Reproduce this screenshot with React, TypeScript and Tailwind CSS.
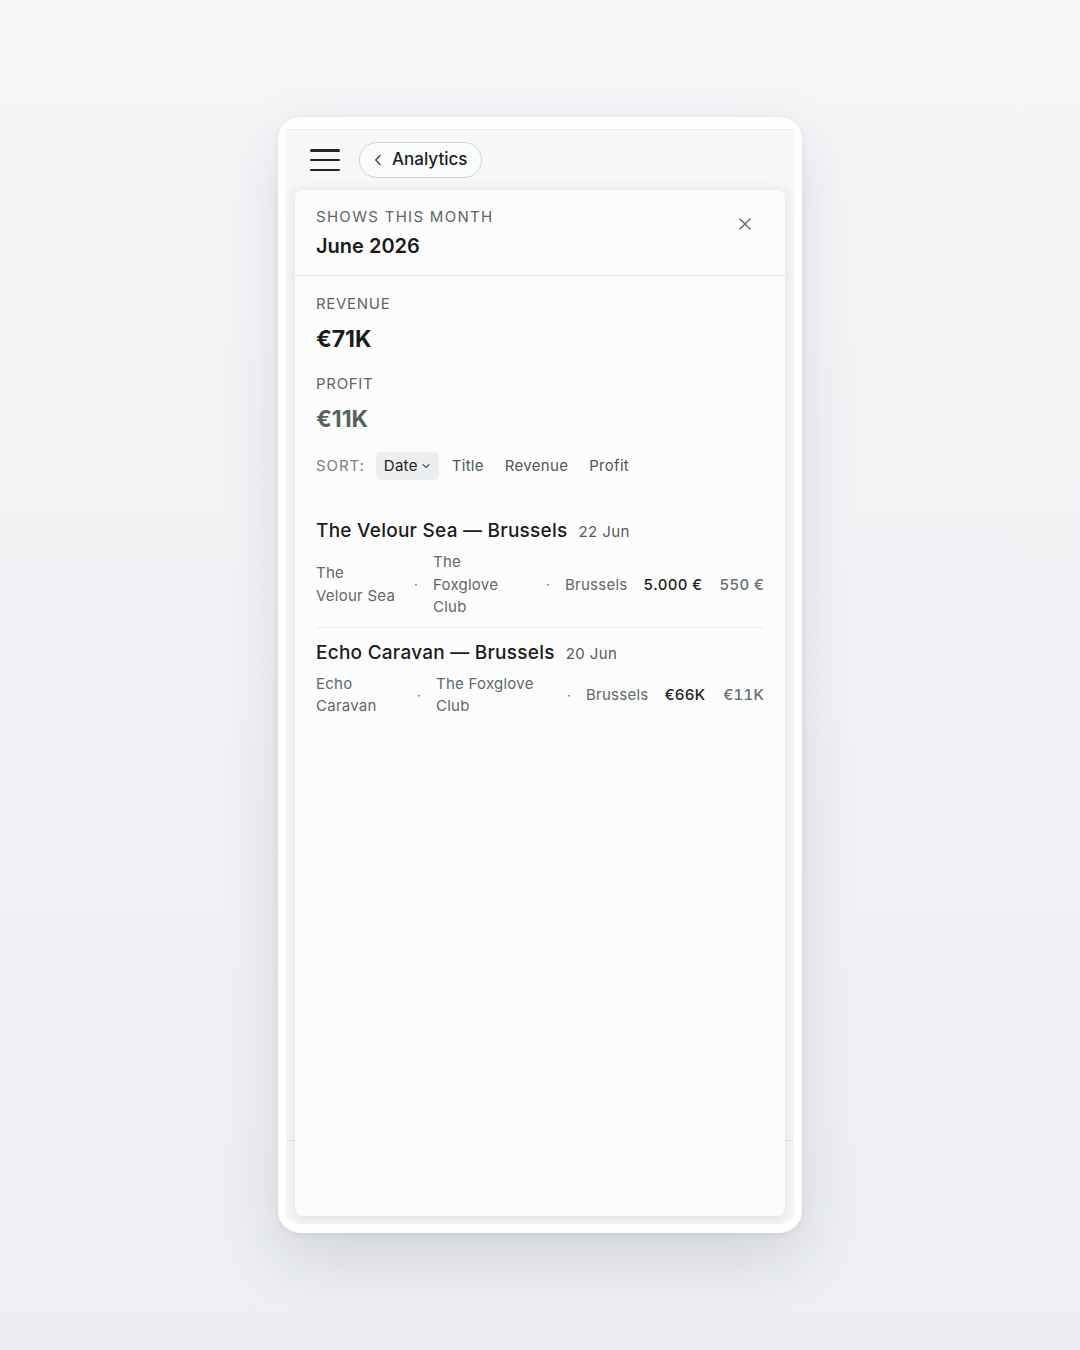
import React from 'react';

interface Show {
  id: number;
  title: string;
  date: string;
  artist: string[];
  venue: string[];
  city: string;
  revenue: string;
  profit: string;
  artistWidth: string;
  venueWidth: string;
}

// lines are pre-split so the narrow columns break the same way every time
const shows: Show[] = [
  {
    id: 1,
    title: 'The Velour Sea — Brussels',
    date: '22 Jun',
    artist: ['The', 'Velour Sea'],
    venue: ['The', 'Foxglove', 'Club'],
    city: 'Brussels',
    revenue: '5.000 €',
    profit: '550 €',
    artistWidth: 'w-[83px]',
    venueWidth: 'w-[98px]',
  },
  {
    id: 2,
    title: 'Echo Caravan — Brussels',
    date: '20 Jun',
    artist: ['Echo', 'Caravan'],
    venue: ['The Foxglove', 'Club'],
    city: 'Brussels',
    revenue: '€66K',
    profit: '€11K',
    artistWidth: 'w-[86px]',
    venueWidth: 'w-[116px]',
  },
];

const sortOptions = ['Title', 'Revenue', 'Profit'];

const Dot: React.FC = () => (
  <span className="w-[6px] shrink-0 text-center text-[13px] leading-none text-[#5f6966]">·</span>
);

const Lines: React.FC<{ lines: string[]; width: string }> = ({ lines, width }) => (
  <span className={`${width} shrink-0 flex flex-col`}>
    {lines.map((l) => (
      <span key={l} className="whitespace-nowrap">
        {l}
      </span>
    ))}
  </span>
);

const ShowRow: React.FC<{ show: Show; last: boolean }> = ({ show, last }) => (
  <div className={last ? 'pt-[11px]' : 'pb-[8px] border-b border-[#eceef0]'}>
    <div className="flex items-baseline gap-[11px] h-[28px] leading-[28px]">
      <span className="text-[19px] font-medium tracking-[0.25px] text-[#1b1d1c]">{show.title}</span>
      <span className="text-[15px] text-[#555c5a] tracking-[0.4px]">{show.date}</span>
    </div>
    <div className="mt-[6px] flex items-center gap-[14px] text-[15px] leading-[22.5px] text-[#5f6966] tracking-[0.25px]">
      <Lines lines={show.artist} width={show.artistWidth} />
      <Dot />
      <Lines lines={show.venue} width={show.venueWidth} />
      <Dot />
      <span className="shrink-0">{show.city}</span>
      <span className="ml-[2px] shrink-0 font-medium tabular-nums text-[#1e201f]">{show.revenue}</span>
      <span className="ml-auto shrink-0 font-medium tabular-nums text-right text-[#66706d]">{show.profit}</span>
    </div>
  </div>
);

const App: React.FC = () => {
  return (
    <div
      className="min-h-[1350px] w-full flex justify-center pt-[117px] bg-gradient-to-b from-[#f5f6f8] to-[#eceef1]"
      style={{ fontFamily: 'Inter, "Noto Sans", sans-serif' }}
    >
      {/* device frame */}
      <div className="w-[524px] h-[1116px] rounded-[22px] bg-[#fdfdfe] pt-[12px] px-[8px] pb-[9px] shadow-[0_24px_60px_rgba(30,41,59,0.13),0_2px_6px_rgba(30,41,59,0.06)]">
        <div className="relative h-full flex flex-col bg-[#f6f7f8] border-t border-[#eceef0] rounded-b-[12px] overflow-hidden">
          {/* top bar */}
          <div className="h-[60px] flex items-center pl-[24px] gap-[19px]">
            <button className="w-[30px] h-[24px] flex flex-col justify-between py-[1px]">
              <span className="block h-[2.5px] w-full bg-[#222423] rounded-full" />
              <span className="block h-[2.5px] w-full bg-[#222423] rounded-full" />
              <span className="block h-[2.5px] w-full bg-[#222423] rounded-full" />
            </button>
            <button className="h-[36px] flex items-center gap-[10px] pl-[14px] pr-[14px] rounded-full border border-[#d3d6d9] bg-[#fafbfb]">
              <svg width="8" height="12" viewBox="0 0 8 12" fill="none">
                <path d="M6 1.5L1.8 6L6 10.5" stroke="#3a3f3d" strokeWidth="1.3" strokeLinecap="round" strokeLinejoin="round" />
              </svg>
              <span className="text-[17px] font-medium text-[#1c1e1d]">Analytics</span>
            </button>
          </div>

          <div className="flex-1" />
          <div className="h-[84px] border-t border-[#e6e8eb]" />

          {/* month sheet */}
          <div className="absolute top-[60px] left-[9px] right-[9px] bottom-[8px] rounded-[8px] bg-[#fcfcfc] shadow-[0_2px_14px_rgba(30,41,59,0.12)] flex flex-col">
            <div className="flex items-start justify-between pl-[21px] pr-[24px] pt-[17px] pb-[15px] border-b border-[#e4e6e9]">
              <div>
                <div className="text-[15px] leading-[20px] tracking-[1.3px] text-[#5b6662]">SHOWS THIS MONTH</div>
                <div className="mt-[5px] text-[20px] leading-[28px] font-semibold text-[#1a1c1b]">June 2026</div>
              </div>
              <button className="mt-[1px] w-[32px] h-[32px] flex items-center justify-center">
                <svg width="12" height="12" viewBox="0 0 12 12" fill="none">
                  <path d="M1 1L11 11M11 1L1 11" stroke="#5a605e" strokeWidth="1.3" strokeLinecap="round" />
                </svg>
              </button>
            </div>

            <div className="px-[21px] pt-[18px]">
              <div className="text-[15px] leading-[20px] tracking-[0.7px] text-[#5b6662]">REVENUE</div>
              <div className="mt-[10px] text-[23px] leading-[30px] font-bold text-[#1a1c1b]">€71K</div>
              <div className="mt-[20px] text-[15px] leading-[20px] tracking-[0.7px] text-[#5b6662]">PROFIT</div>
              <div className="mt-[10px] text-[23px] leading-[30px] font-bold text-[#56625e]">€11K</div>

              <div className="mt-[18px] flex items-center gap-[5px] text-[15px] tracking-[0.3px]">
                <span className="mr-[6px] tracking-[0.9px] text-[#7a8080]">SORT:</span>
                <button className="h-[28px] flex items-center gap-[4px] pl-[8px] pr-[9px] rounded-[5px] bg-[#eceef0] text-[#1f2120]">
                  Date
                  <svg width="8" height="6" viewBox="0 0 8 6" fill="none">
                    <path d="M1 1.5L4 4.5L7 1.5" stroke="#555b59" strokeWidth="1.1" strokeLinecap="round" strokeLinejoin="round" />
                  </svg>
                </button>
                {sortOptions.map((opt) => (
                  <button key={opt} className="h-[28px] px-[8px] text-[#4d5855]">
                    {opt}
                  </button>
                ))}
              </div>

              <div className="mt-[37px]">
                {shows.map((show, i) => (
                  <ShowRow key={show.id} show={show} last={i === shows.length - 1} />
                ))}
              </div>
            </div>
          </div>
        </div>
      </div>
    </div>
  );
};

export default App;
